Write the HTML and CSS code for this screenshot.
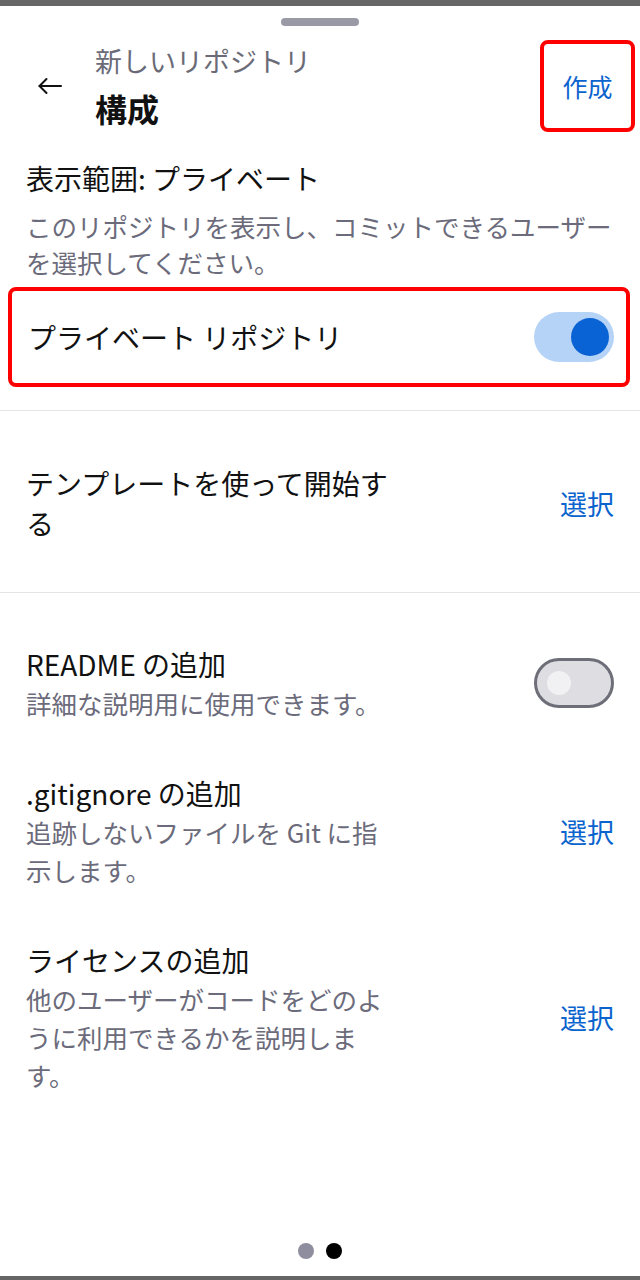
FILE: index.html
```html
<!DOCTYPE html>
<html lang="ja">

<head>
    <meta charset="UTF-8">
    <meta name="viewport" content="width=device-width, initial-scale=1.0">
    <title>構成</title>
    <link rel="stylesheet" href="styles.css">
</head>

<body>
    <div class="page">
        <div class="status-bar"></div>
        <div class="handle"></div>

        <div class="header">
            <div class="back">
                <svg width="26" height="26" viewBox="0 0 26 26" fill="none" stroke="#111" stroke-width="2"
                    stroke-linecap="round" stroke-linejoin="round">
                    <path d="M24 13H2.5" />
                    <path d="M9.5 6L2.5 13L9.5 20" />
                </svg>
            </div>
            <div class="header-titles">
                <div class="subtitle">新しいリポジトリ</div>
                <div class="title">構成</div>
            </div>
            <div class="create-btn highlight">作成</div>
        </div>

        <div class="visibility">
            <div class="section-title">表示範囲: プライベート</div>
            <div class="section-desc">このリポジトリを表示し、コミットできるユーザーを選択してください。</div>
        </div>

        <div class="private-row highlight">
            <div class="row-title">プライベート リポジトリ</div>
            <div class="toggle on"><span class="knob"></span></div>
        </div>

        <div class="divider"></div>

        <div class="template-row">
            <div class="row-text">
                <div class="row-title">テンプレートを使って開始する</div>
            </div>
            <div class="link">選択</div>
        </div>

        <div class="divider"></div>

        <div class="options">
            <div class="row">
                <div class="row-text">
                    <div class="row-title">README の追加</div>
                    <div class="row-desc">詳細な説明用に使用できます。</div>
                </div>
                <div class="toggle off"><span class="knob"></span></div>
            </div>
            <div class="row">
                <div class="row-text">
                    <div class="row-title">.gitignore の追加</div>
                    <div class="row-desc">追跡しないファイルを Git に指示します。</div>
                </div>
                <div class="link">選択</div>
            </div>
            <div class="row">
                <div class="row-text">
                    <div class="row-title">ライセンスの追加</div>
                    <div class="row-desc">他のユーザーがコードをどのように利用できるかを説明します。</div>
                </div>
                <div class="link">選択</div>
            </div>
        </div>

        <div class="spacer"></div>

        <div class="pager">
            <span class="dot"></span>
            <span class="dot active"></span>
        </div>
        <div class="bottom-bar"></div>
    </div>
</body>

</html>
```

FILE: styles.css
```css
body {
    margin: 0;
    background: #fff;
    font-family: "Noto Sans CJK JP", "Noto Sans", sans-serif;
    color: #111;
}

.page {
    display: flex;
    flex-direction: column;
    height: 1280px;
}

.status-bar {
    height: 6px;
    background: #666;
}

.bottom-bar {
    height: 4px;
    background: #666;
}

.handle {
    width: 78px;
    height: 8px;
    border-radius: 4px;
    background: #9a9aa6;
    margin: 12px auto 0;
}

/* header */
.header {
    display: flex;
    align-items: center;
    margin-top: 14px;
    padding-left: 37px;
    padding-right: 5px;
}

.back {
    width: 26px;
    height: 26px;
    margin-right: 32px;
}

.back svg {
    display: block;
}

.header-titles {
    flex: 1;
}

.subtitle {
    font-size: 27px;
    line-height: 40px;
    color: #6b6b78;
}

.title {
    font-size: 32px;
    font-weight: bold;
    line-height: 48px;
    margin-top: 3px;
}

.highlight {
    border: 4px solid #f00;
    border-radius: 8px;
}

.create-btn {
    width: 87px;
    height: 84px;
    display: flex;
    align-items: center;
    justify-content: center;
    font-size: 25px;
    color: #0b63ce;
}

/* visibility */
.visibility {
    padding: 0 26px;
    margin-top: 26px;
}

.section-title {
    font-size: 28px;
    line-height: 40px;
}

.section-desc {
    font-size: 25.5px;
    line-height: 36px;
    color: #6b6b7b;
    margin-top: 10px;
}

.private-row {
    margin: 7px 10px 0 8px;
    height: 92px;
    padding: 0 12px 0 16px;
    display: flex;
    align-items: center;
    justify-content: space-between;
}

.divider {
    height: 1px;
    background: #e3e3e8;
}

.private-row + .divider {
    margin-top: 23px;
}

/* rows */
.template-row {
    display: flex;
    align-items: center;
    justify-content: space-between;
    padding: 52px 26px 49px;
}

.row-text {
    max-width: 368px;
}

.row-title {
    font-size: 28px;
    line-height: 40px;
}

.row-desc {
    font-size: 25.5px;
    line-height: 38px;
    color: #6b6b7b;
}

.link {
    font-size: 27px;
    color: #0b63ce;
}

.options {
    padding-top: 25px;
}

.row {
    display: flex;
    align-items: center;
    justify-content: space-between;
    padding: 26px 26px 25px;
}

/* toggles */
.toggle {
    width: 80px;
    height: 50px;
    border-radius: 25px;
    box-sizing: border-box;
    position: relative;
    flex-shrink: 0;
}

.toggle.on {
    background: #b5d3f6;
}

.toggle.on .knob {
    position: absolute;
    right: 5px;
    top: 6px;
    width: 38px;
    height: 38px;
    border-radius: 50%;
    background: #0a63d4;
}

.toggle.off {
    background: #dddde2;
    border: 3px solid #6e6e78;
}

.toggle.off .knob {
    position: absolute;
    left: 10px;
    top: 10px;
    width: 24px;
    height: 24px;
    border-radius: 50%;
    background: #f1f1f3;
}

.spacer {
    flex: 1;
}

/* pager */
.pager {
    display: flex;
    justify-content: center;
    gap: 12px;
    margin-bottom: 17px;
}

.dot {
    width: 16px;
    height: 16px;
    border-radius: 50%;
    background: #8e8e9e;
}

.dot.active {
    background: #000;
}
```
